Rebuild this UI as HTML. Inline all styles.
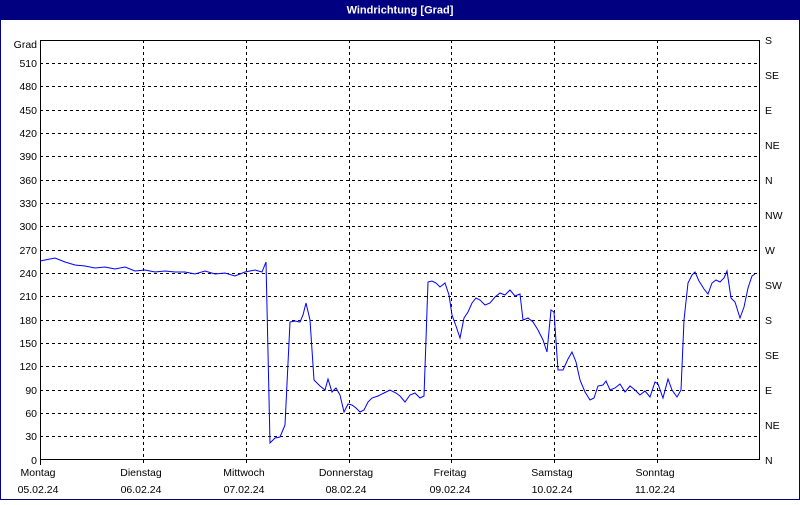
<!DOCTYPE html>
<html><head><meta charset="utf-8"><style>
body{margin:0;width:800px;height:500px;overflow:hidden;background:#fff;font-family:"Liberation Sans",sans-serif;}
</style></head><body>
<svg width="800" height="500" xmlns="http://www.w3.org/2000/svg" font-family="Liberation Sans, sans-serif" font-size="10.5">
<rect x="0" y="0" width="800" height="500" fill="#fff"/>
<rect x="0.5" y="0.5" width="799" height="499" fill="none" stroke="#000080"/>
<rect x="0" y="0" width="800" height="20" fill="#000080"/>
<text x="400" y="13.5" fill="#fff" font-weight="bold" text-anchor="middle" font-size="11">Windrichtung [Grad]</text>
<g stroke="#000" stroke-dasharray="3,3" stroke-width="1">
<line x1="40" y1="63.5" x2="760" y2="63.5"/><line x1="40" y1="86.5" x2="760" y2="86.5"/><line x1="40" y1="110.5" x2="760" y2="110.5"/><line x1="40" y1="133.5" x2="760" y2="133.5"/><line x1="40" y1="156.5" x2="760" y2="156.5"/><line x1="40" y1="180.5" x2="760" y2="180.5"/><line x1="40" y1="203.5" x2="760" y2="203.5"/><line x1="40" y1="226.5" x2="760" y2="226.5"/><line x1="40" y1="250.5" x2="760" y2="250.5"/><line x1="40" y1="273.5" x2="760" y2="273.5"/><line x1="40" y1="296.5" x2="760" y2="296.5"/><line x1="40" y1="320.5" x2="760" y2="320.5"/><line x1="40" y1="343.5" x2="760" y2="343.5"/><line x1="40" y1="366.5" x2="760" y2="366.5"/><line x1="40" y1="390.5" x2="760" y2="390.5"/><line x1="40" y1="413.5" x2="760" y2="413.5"/><line x1="40" y1="436.5" x2="760" y2="436.5"/>
<line x1="143.5" y1="40" x2="143.5" y2="465"/><line x1="246.5" y1="40" x2="246.5" y2="465"/><line x1="349.5" y1="40" x2="349.5" y2="465"/><line x1="451.5" y1="40" x2="451.5" y2="465"/><line x1="554.5" y1="40" x2="554.5" y2="465"/><line x1="657.5" y1="40" x2="657.5" y2="465"/>
</g>
<rect x="40.5" y="40.5" width="719" height="419" fill="none" stroke="#000"/>
<line x1="40.5" y1="460" x2="40.5" y2="465" stroke="#000"/>
<g text-anchor="end">
<text x="37" y="48">Grad</text><text x="37" y="67">510</text><text x="37" y="90">480</text><text x="37" y="114">450</text><text x="37" y="137">420</text><text x="37" y="160">390</text><text x="37" y="184">360</text><text x="37" y="207">330</text><text x="37" y="230">300</text><text x="37" y="254">270</text><text x="37" y="277">240</text><text x="37" y="300">210</text><text x="37" y="324">180</text><text x="37" y="347">150</text><text x="37" y="370">120</text><text x="37" y="394">90</text><text x="37" y="417">60</text><text x="37" y="440">30</text><text x="37" y="464">0</text>
</g>
<g>
<text x="765" y="44">S</text><text x="765" y="79">SE</text><text x="765" y="114">E</text><text x="765" y="149">NE</text><text x="765" y="184">N</text><text x="765" y="219">NW</text><text x="765" y="254">W</text><text x="765" y="289">SW</text><text x="765" y="324">S</text><text x="765" y="359">SE</text><text x="765" y="394">E</text><text x="765" y="429">NE</text><text x="765" y="464">N</text>
</g>
<g text-anchor="middle">
<text x="38" y="476">Montag</text><text x="38" y="493">05.02.24</text>
<text x="141" y="476">Dienstag</text><text x="141" y="493">06.02.24</text>
<text x="244" y="476">Mittwoch</text><text x="244" y="493">07.02.24</text>
<text x="346" y="476">Donnerstag</text><text x="346" y="493">08.02.24</text>
<text x="450" y="476">Freitag</text><text x="450" y="493">09.02.24</text>
<text x="552" y="476">Samstag</text><text x="552" y="493">10.02.24</text>
<text x="655" y="476">Sonntag</text><text x="655" y="493">11.02.24</text>
</g>
<polyline fill="none" stroke="#0000ff" stroke-width="1" points="40,261 50,259 55,258 65,262 75,265 85,266 95,268 105,267 115,269 125,267 135,271 145,270 155,272 165,271 175,272 185,272 195,274 205,271 215,274 225,273 235,276 245,272 255,270 262,272 266,262 270,443 275,438 280,437 285,425 290,322 295,321 300,322 303,315 306,303 310,320 314,380 320,386 325,390 328,379 332,392 336,388 340,395 344,412 348,404 352,405 356,408 360,412 364,410 368,402 372,398 378,396 384,393 390,390 396,393 400,396 405,402 410,395 415,393 420,398 424,396 428,282 432,281 436,283 440,287 445,283 449,295 452,315 456,326 460,338 464,318 468,312 472,303 476,298 480,300 485,305 490,303 495,297 500,293 505,295 510,290 515,296 520,294 523,320 528,318 533,322 538,330 543,340 547,352 551,310 554,312 558,370 563,370 568,359 572,352 576,362 580,380 585,392 590,400 594,398 598,386 603,385 606,381 610,390 615,388 620,384 625,392 630,386 635,390 640,395 645,391 650,397 655,382 658,384 663,398 668,379 672,390 677,397 681,390 684,320 688,283 692,275 695,272 699,281 704,289 708,294 712,283 716,280 720,282 724,278 727,271 731,298 735,302 740,318 744,307 748,288 752,276 755,274"/>
</svg>
</body></html>
